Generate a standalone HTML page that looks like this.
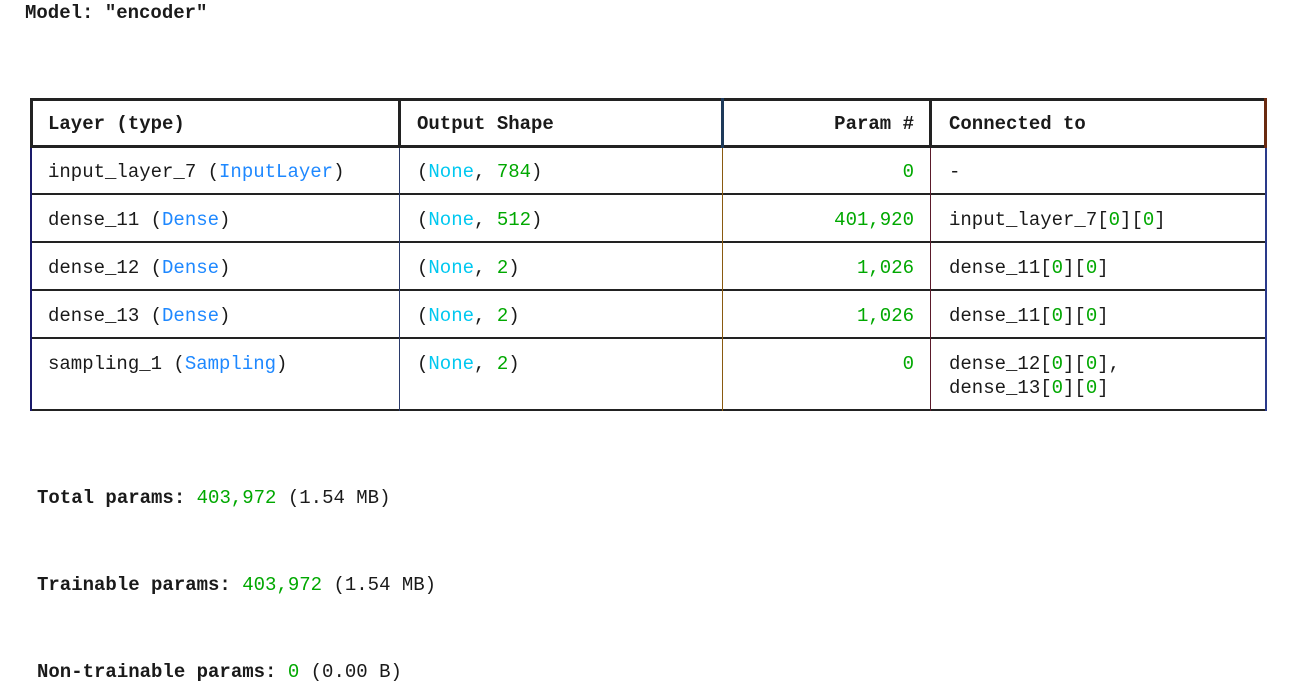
<!DOCTYPE html>
<html><head><meta charset="utf-8"><style>
body{margin:0;background:#fff;width:1316px;height:692px;overflow:hidden;position:relative;font-family:"Liberation Mono","DejaVu Sans Mono",monospace;font-size:19px;color:#1a1a1a}
.t{position:absolute;white-space:pre;line-height:24px}
.b{font-weight:bold}
.g{color:#00a800}.c{color:#00c8f0}.bl{color:#1e88ff}
.l{position:absolute;background:#222}
.r{text-align:right}
</style></head><body>
<div class="t b" style="left:25px;top:1px">Model: "encoder"</div>

<!-- header frame -->
<div class="l" style="left:30px;top:98px;width:1237px;height:3px"></div>
<div class="l" style="left:30px;top:145px;width:1237px;height:3px"></div>
<div class="l" style="left:30px;top:98px;width:3px;height:50px"></div>
<div class="l" style="left:1264px;top:98px;width:3px;height:50px;background:#6a2a10"></div>
<div class="l" style="left:398px;top:98px;width:3px;height:50px"></div>
<div class="l" style="left:721px;top:98px;width:3px;height:50px;background:#1e3a5a"></div>
<div class="l" style="left:929px;top:98px;width:3px;height:50px"></div>
<!-- body lines -->
<div class="l" style="left:30px;top:193px;width:1237px;height:2px"></div>
<div class="l" style="left:30px;top:241px;width:1237px;height:2px"></div>
<div class="l" style="left:30px;top:289px;width:1237px;height:2px"></div>
<div class="l" style="left:30px;top:337px;width:1237px;height:2px"></div>
<div class="l" style="left:30px;top:409px;width:1237px;height:2px"></div>
<div class="l" style="left:30px;top:148px;width:2px;height:263px;background:#1a1a6a"></div>
<div class="l" style="left:1265px;top:148px;width:2px;height:263px;background:#2a3a8a"></div>
<div class="l" style="left:399px;top:148px;width:1px;height:263px;background:#2a3a6a"></div>
<div class="l" style="left:722px;top:148px;width:1px;height:263px;background:#8a5a10"></div>
<div class="l" style="left:930px;top:148px;width:1px;height:263px;background:#5a1a2a"></div>

<div class="t b" style="left:48px;top:112px">Layer (type)</div>
<div class="t b" style="left:417px;top:112px">Output Shape</div>
<div class="t b r" style="left:730px;top:112px;width:184px">Param #</div>
<div class="t b" style="left:949px;top:112px">Connected to</div>

<div class="t" style="left:48px;top:160px">input_layer_7 (<span class="bl">InputLayer</span>)</div>
<div class="t" style="left:417px;top:160px">(<span class="c">None</span>, <span class="g">784</span>)</div>
<div class="t r g" style="left:730px;top:160px;width:184px">0</div>
<div class="t" style="left:949px;top:160px">-</div>

<div class="t" style="left:48px;top:208px">dense_11 (<span class="bl">Dense</span>)</div>
<div class="t" style="left:417px;top:208px">(<span class="c">None</span>, <span class="g">512</span>)</div>
<div class="t r g" style="left:730px;top:208px;width:184px">401,920</div>
<div class="t" style="left:949px;top:208px">input_layer_7[<span class="g">0</span>][<span class="g">0</span>]</div>

<div class="t" style="left:48px;top:256px">dense_12 (<span class="bl">Dense</span>)</div>
<div class="t" style="left:417px;top:256px">(<span class="c">None</span>, <span class="g">2</span>)</div>
<div class="t r g" style="left:730px;top:256px;width:184px">1,026</div>
<div class="t" style="left:949px;top:256px">dense_11[<span class="g">0</span>][<span class="g">0</span>]</div>

<div class="t" style="left:48px;top:304px">dense_13 (<span class="bl">Dense</span>)</div>
<div class="t" style="left:417px;top:304px">(<span class="c">None</span>, <span class="g">2</span>)</div>
<div class="t r g" style="left:730px;top:304px;width:184px">1,026</div>
<div class="t" style="left:949px;top:304px">dense_11[<span class="g">0</span>][<span class="g">0</span>]</div>

<div class="t" style="left:48px;top:352px">sampling_1 (<span class="bl">Sampling</span>)</div>
<div class="t" style="left:417px;top:352px">(<span class="c">None</span>, <span class="g">2</span>)</div>
<div class="t r g" style="left:730px;top:352px;width:184px">0</div>
<div class="t" style="left:949px;top:352px">dense_12[<span class="g">0</span>][<span class="g">0</span>],</div>
<div class="t" style="left:949px;top:376px">dense_13[<span class="g">0</span>][<span class="g">0</span>]</div>

<div class="t" style="left:37px;top:486px"><span class="b">Total params: </span><span class="g">403,972</span> (1.54 MB)</div>
<div class="t" style="left:37px;top:573px"><span class="b">Trainable params: </span><span class="g">403,972</span> (1.54 MB)</div>
<div class="t" style="left:37px;top:660px"><span class="b">Non-trainable params: </span><span class="g">0</span> (0.00 B)</div>
</body></html>
